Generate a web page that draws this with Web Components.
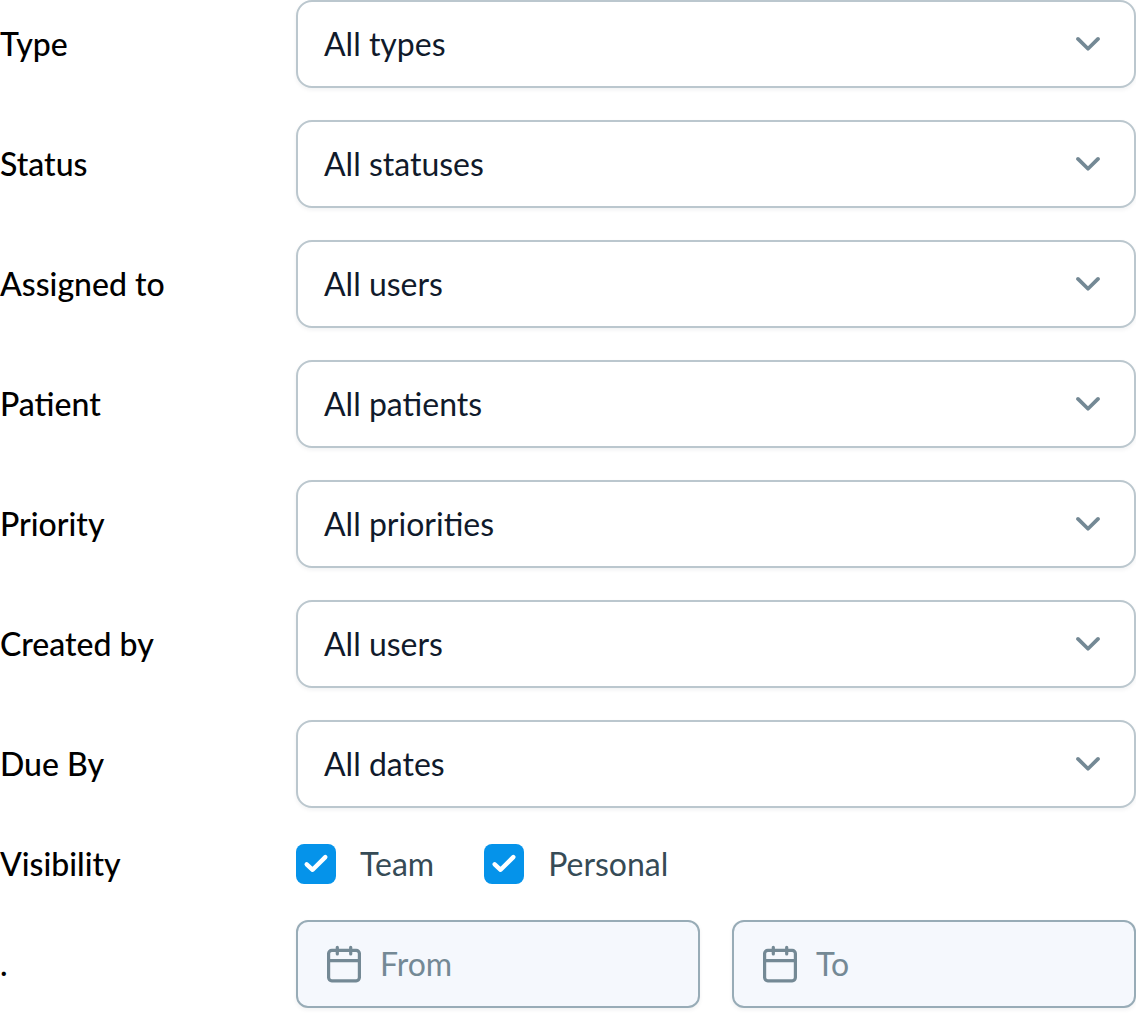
<!DOCTYPE html>
<html lang="en">
<head>
<meta charset="utf-8">
<title>Task filters</title>
<style>
html, body { margin: 0; background: #fff; }
body { font: 32px/40px Lato, "Liberation Sans", sans-serif; color: #000; height: 1024px; overflow: hidden; }
</style>
</head>
<body>
<filter-panel></filter-panel>
<script>
const define = (name, html) => {
  const template = document.createElement('template');
  template.innerHTML = html;
  customElements.define(name, class extends HTMLElement {
    constructor() {
      super();
      this.attachShadow({ mode: 'open' }).append(template.content.cloneNode(true));
    }
  });
};

define('filter-row', `
<style>
  :host { display: flex; align-items: center; height: 88px; }
  .label { flex: 0 0 296px; box-sizing: border-box; white-space: nowrap; font-weight: 500; }
  .control { flex: 1; display: flex; min-width: 0; }
  :host([compact]) { height: 40px; }
  :host([compact]) .control { gap: 50px; }
  :host([split]) .control { gap: 32px; }
</style>
<div class="label"><slot name="label"></slot></div>
<div class="control"><slot></slot></div>`);

define('select-field', `
<style>
  :host { flex: 1; display: flex; align-items: center; justify-content: space-between; box-sizing: border-box;
    height: 88px; padding: 0 34px 0 26px; border: 2px solid #bbc7ce; border-radius: 16px; background: #fff;
    color: #101a2b; box-shadow: 0 2px 4px rgba(16,26,43,.06); }
  svg { display: block; }
</style>
<span class="value"><slot></slot></span>
<svg width="24" height="24" viewBox="0 0 24 24" fill="none" stroke="#748995" stroke-width="3.7" stroke-linecap="round" stroke-linejoin="round"><path d="M2 6.9 12 16.8 22 6.9"/></svg>`);

define('check-option', `
<style>
  :host { display: flex; align-items: center; gap: 24px; color: #364b56; }
  .box { width: 40px; height: 40px; border-radius: 8px; background: #0593ea; }
  svg { display: block; }
</style>
<span class="box"><svg width="40" height="40" viewBox="0 0 40 40" fill="none" stroke="#fff" stroke-width="4.4" stroke-linecap="round" stroke-linejoin="round"><path d="M10.7 20.3 16.6 25.8 29.3 13.1"/></svg></span>
<span class="text"><slot></slot></span>`);

define('date-field', `
<style>
  :host { flex: 1; display: flex; align-items: center; gap: 16px; box-sizing: border-box; height: 88px;
    padding: 0 26px; border: 2px solid #98acb7; border-radius: 12px; background: #f5f8fd;
    color: #748995; box-shadow: 0 2px 4px rgba(16,26,43,.06); }
  svg { display: block; }
</style>
<svg width="40" height="40" viewBox="0 0 40 40" fill="none" stroke="#748995" stroke-width="3.2" stroke-linecap="round" stroke-linejoin="round"><rect x="4.6" y="6.4" width="30.8" height="30.4" rx="3.2"/><path d="M4.6 16.6H35.4M13.3 3.3V9.9M26.7 3.3V9.9"/></svg>
<span class="text"><slot></slot></span>`);

define('filter-panel', `
<style>
  :host { display: block; width: 1136px; }
  .rows { display: flex; flex-direction: column; gap: 32px; }
  .tail { display: flex; flex-direction: column; gap: 36px; padding-top: 36px; }
</style>
<div class="rows">
  <filter-row><span slot="label">Type</span><select-field>All types</select-field></filter-row>
  <filter-row><span slot="label">Status</span><select-field>All statuses</select-field></filter-row>
  <filter-row><span slot="label">Assigned to</span><select-field>All users</select-field></filter-row>
  <filter-row><span slot="label">Patient</span><select-field>All patients</select-field></filter-row>
  <filter-row><span slot="label">Priority</span><select-field>All priorities</select-field></filter-row>
  <filter-row><span slot="label">Created by</span><select-field>All users</select-field></filter-row>
  <filter-row><span slot="label">Due By</span><select-field>All dates</select-field></filter-row>
</div>
<div class="tail">
  <filter-row compact><span slot="label">Visibility</span><check-option>Team</check-option><check-option>Personal</check-option></filter-row>
  <filter-row split><span slot="label">.</span><date-field>From</date-field><date-field>To</date-field></filter-row>
</div>`);
</script>
</body>
</html>
